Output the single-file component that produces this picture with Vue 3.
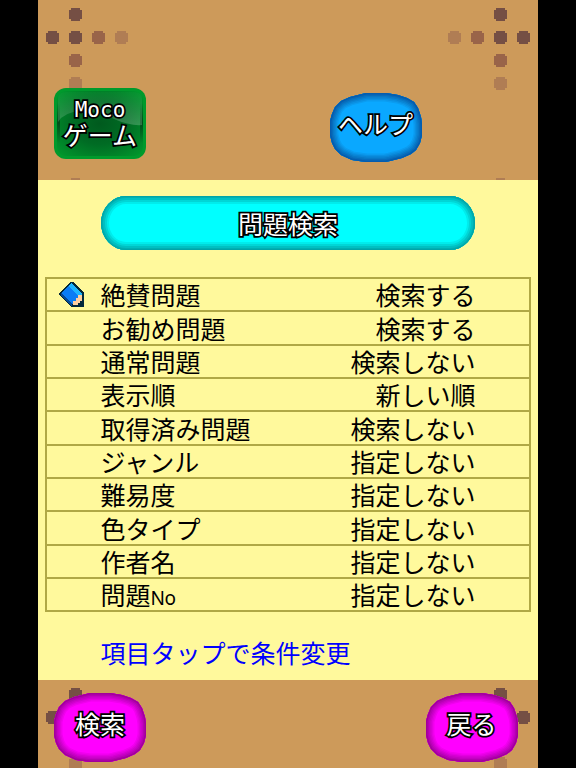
<script setup>
// 検索条件の一覧
const items = [
  { name: '絶賛問題', value: '検索する' },
  { name: 'お勧め問題', value: '検索する' },
  { name: '通常問題', value: '検索しない' },
  { name: '表示順', value: '新しい順' },
  { name: '取得済み問題', value: '検索しない' },
  { name: 'ジャンル', value: '指定しない' },
  { name: '難易度', value: '指定しない' },
  { name: '色タイプ', value: '指定しない' },
  { name: '作者名', value: '指定しない' },
  { name: '問題', latin: 'No', value: '指定しない' },
]

const selected = 0

// 背景のドット模様
const dark = '#754f44'
const middle = '#996449'
const light = '#b07d54'
const dots = [
  { x: 37, y: 15, c: dark },
  { x: 14, y: 38, c: dark },
  { x: 37, y: 38, c: dark },
  { x: 60, y: 38, c: middle },
  { x: 83, y: 38, c: light },
  { x: 37, y: 61, c: middle },
  { x: 37, y: 84, c: light },
  { x: 37, y: 185, c: light },
  { x: 462, y: 15, c: dark },
  { x: 485, y: 38, c: dark },
  { x: 462, y: 38, c: dark },
  { x: 439, y: 38, c: middle },
  { x: 416, y: 38, c: light },
  { x: 462, y: 61, c: middle },
  { x: 462, y: 84, c: light },
  { x: 462, y: 185, c: light },
]
const dotPath = ({ x, y }) =>
  `M${x - 4} ${y - 7}h9v2h2v9h-2v2h-9v-2h-2v-9h2z`

// ボタンの形と縁のグラデーション
const blob = 'M36 0H56L68 2L77 5L84 9L88 15L91 24L92 31V42L90 50L86 57L81 61L72 65L60 68L55 69H36L22 67L11 62L5 56L2 50L0 42V28L2 21L5 14L11 8L20 4L28 2Z'
const helpEdge = ['#0b9cf0', '#0a90e2', '#0984d4', '#0878c6', '#076bbb', '#055cae']
const pinkEdge = ['#f000ee', '#e200e0', '#d200d0', '#c400c2', '#b400b2', '#a2009b']
const edgeWidth = (i) => 17 - i * 2.8
</script>

<template>
  <div class="screen">
    <header class="wood top">
      <svg class="pattern" viewBox="0 0 500 180">
        <path v-for="(d, i) in dots" :key="i" :d="dotPath(d)" :fill="d.c" />
      </svg>
      <button class="btn game">
        <svg class="shape" viewBox="0 0 92 71">
          <defs>
            <linearGradient id="gloss" x1="0" y1="0" x2="0" y2="1">
              <stop offset="0" stop-color="#fff" stop-opacity="0.02" />
              <stop offset="1" stop-color="#fff" stop-opacity="0.2" />
            </linearGradient>
            <radialGradient id="green" cx="0.5" cy="0.5" r="0.65">
              <stop offset="0" stop-color="#005a1e" />
              <stop offset="0.5" stop-color="#006c24" />
              <stop offset="1" stop-color="#00942c" />
            </radialGradient>
            <linearGradient id="side" x1="0" y1="0" x2="0" y2="1">
              <stop offset="0.1" stop-color="#003c16" stop-opacity="0" />
              <stop offset="0.5" stop-color="#003c16" stop-opacity="0.75" />
              <stop offset="0.9" stop-color="#003c16" stop-opacity="0" />
            </linearGradient>
          </defs>
          <rect width="92" height="71" rx="12" fill="#009a2c" />
          <rect x="3" y="3" width="86" height="65" rx="9" fill="url(#green)" />
          <rect x="3" y="10" width="3" height="50" fill="url(#side)" />
          <rect x="86" y="10" width="3" height="50" fill="url(#side)" />
          <path d="M4 11Q4 4 12 4H80Q88 4 88 11V37Q76 38 60 31Q44 22 27 23Q10 24 4 34Z" fill="url(#gloss)" />
        </svg>
        <span class="label game-label"><span class="moco">Moco</span><span>ゲーム</span></span>
      </button>
      <button class="btn help">
        <svg class="shape" viewBox="0 0 92 69">
          <clipPath id="blob-help"><path :d="blob" /></clipPath>
          <path :d="blob" fill="#0aa8ff" />
          <g clip-path="url(#blob-help)" fill="none">
            <path v-for="(c, i) in helpEdge" :key="c" :d="blob" :stroke="c" :stroke-width="edgeWidth(i)" />
          </g>
        </svg>
        <span class="label">ヘルプ</span>
      </button>
    </header>

    <main class="panel">
      <h1 class="title"><span class="label">問題検索</span></h1>
      <ul class="list">
        <li v-for="(item, i) in items" :key="item.name" class="row">
          <span class="cursor">
            <svg v-if="i === selected" viewBox="0 0 25 25" width="25" height="25">
              <path d="M11 0H14L25 11V25H13L0 13V11Z" fill="#04293a" />
              <path d="M12 1L23 12L13 22L2 11Z" fill="#0a7cf5" />
              <path d="M12 1L23 12L20 15L9 4Z" fill="#1cb4ff" />
              <path d="M2 11L13 22V24L2 14Z" fill="#064a94" />
              <path d="M19 13H23V19H21V21H19V23H14V19H17V16H19Z" fill="#ffcf9f" />
            </svg>
          </span>
          <span class="name">{{ item.name }}<span v-if="item.latin" class="latin">{{ item.latin }}</span></span>
          <span class="value">{{ item.value }}</span>
        </li>
      </ul>
      <p class="hint">項目タップで条件変更</p>
    </main>

    <footer class="wood bottom">
      <svg class="pattern" viewBox="0 0 500 88">
        <path v-for="(d, i) in dots" :key="i" :d="dotPath(d)" :fill="d.c" />
      </svg>
      <button v-for="text in ['検索', '戻る']" :key="text" class="btn pink">
        <svg class="shape" viewBox="0 0 92 69">
          <clipPath id="blob-pink"><path :d="blob" /></clipPath>
          <path :d="blob" fill="#ff00ff" />
          <g clip-path="url(#blob-pink)" fill="none">
            <path v-for="(c, i) in pinkEdge" :key="c" :d="blob" :stroke="c" :stroke-width="edgeWidth(i)" />
          </g>
        </svg>
        <span class="label">{{ text }}</span>
      </button>
    </footer>
  </div>
</template>

<style>
body {
  background: #000;
}
</style>

<style scoped>
.screen {
  width: 500px;
  height: 768px;
  margin: 0 auto;
  display: flex;
  flex-direction: column;
  overflow: hidden;
  font-family: 'Noto Sans CJK JP', sans-serif;
  font-size: 25px;
  line-height: 1;
  color: #000;
}

.wood {
  position: relative;
  display: flex;
  justify-content: space-between;
  background: #cd9a5a;
  flex-shrink: 0;
  box-sizing: border-box;
  overflow: hidden;
}

.top {
  height: 180px;
  padding: 88px 116.5px 0 16px;
}

.bottom {
  height: 88px;
  padding: 13px 20.5px 0 16px;
}

.pattern {
  position: absolute;
  inset: 0;
  width: 100%;
  height: 100%;
  shape-rendering: crispEdges;
}

.btn {
  position: relative;
  width: 92px;
  height: 69px;
  padding: 0;
  border: 0;
  background: none;
  font: inherit;
  display: flex;
  align-items: center;
  justify-content: center;
}

.btn.game {
  height: 71px;
}

.btn.help {
  margin-top: 5px;
}

.shape {
  position: absolute;
  inset: 0;
  width: 100%;
  height: 100%;
}

/* 黒フチ付きの白文字 */
.label {
  position: relative;
  color: #fff;
  font-weight: 400;
  white-space: nowrap;
  -webkit-text-stroke: 3.5px #000;
  paint-order: stroke fill;
}

.btn .label {
  margin-bottom: 8px;
}

.btn .game-label {
  display: flex;
  flex-direction: column;
  align-items: center;
  margin-bottom: 4px;
}

.moco {
  font-family: 'DejaVu Sans Mono', monospace;
  font-size: 21px;
  line-height: 27px;
  margin-bottom: -2px;
}

.panel {
  height: 500px;
  background: #fff99c;
  padding: 16px 7px 0;
  box-sizing: border-box;
  flex-shrink: 0;
}

.title {
  height: 54px;
  margin: 0 56px 27px;
  display: flex;
  align-items: center;
  justify-content: center;
  border-radius: 25px / 27px;
  background: #00ffff;
  box-shadow: inset 0 0 0 1px #00a5a8, inset 0 0 0 2px #00b0b2, inset 0 0 0 4px #00c0c2,
    inset 0 0 0 6px #00d6d6, inset 0 0 0 8px #00ecec;
  font-size: 25px;
}

.title .label {
  margin-top: 1px;
}

.list {
  list-style: none;
  margin: 0;
  padding: 0;
  border: 2px solid #b0a845;
  border-top: 0;
}

.row {
  height: 33.35px;
  box-sizing: border-box;
  border-top: 2px solid #b0a845;
  display: flex;
  align-items: center;
  padding-right: 53.5px;
}

.cursor {
  width: 53.5px;
  height: 25px;
  padding-left: 12px;
  box-sizing: border-box;
  flex-shrink: 0;
}

.cursor svg {
  display: block;
  shape-rendering: crispEdges;
}

.name {
  flex: 1;
}

.latin {
  font-family: 'Noto Sans', sans-serif;
  font-size: 19px;
  line-height: 1;
  letter-spacing: -0.4px;
}

.hint {
  margin: 28px 0 0 55.5px;
  color: #0000ff;
}
</style>
